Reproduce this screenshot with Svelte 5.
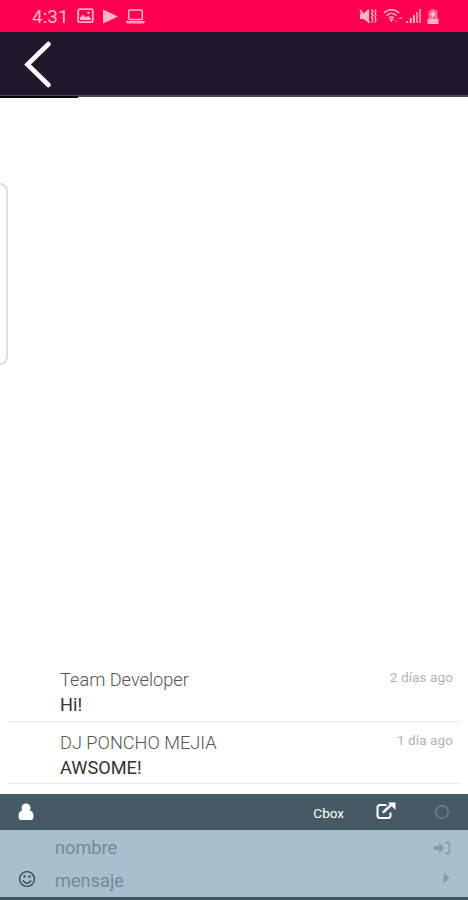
<script lang="ts">
	const messages = [
		{ name: 'Team Developer', text: 'Hi!', time: '2 días ago' },
		{ name: 'DJ PONCHO MEJIA', text: 'AWSOME!', time: '1 día ago' }
	];

	let nombre = $state('');
	let mensaje = $state('');
</script>

<div class="screen">
	<!-- Status bar -->
	<div class="status-bar">
		<span class="clock">4:31</span>
		<svg class="ic-picture" width="17" height="16" viewBox="0 0 17 16">
			<rect x="1.2" y="1.2" width="14.6" height="13" rx="1.5" fill="none" stroke="currentColor" stroke-width="1.8" />
			<path d="M3 12V9.5l3-3 3 3 2-2 3 3V12z" fill="currentColor" />
			<circle cx="11.5" cy="4.7" r="1.2" fill="currentColor" />
		</svg>
		<svg class="ic-play" width="15" height="15" viewBox="0 0 15 15">
			<path d="M0 .5 15 7.5 0 14.5z" fill="currentColor" />
		</svg>
		<svg class="ic-laptop" width="19" height="15" viewBox="0 0 19 15">
			<rect x="2.7" y="1" width="13.6" height="9.5" rx="1" fill="none" stroke="currentColor" stroke-width="1.5" />
			<path d="M.7 12.6h17.6l-1 1.4H1.7z" fill="none" stroke="currentColor" stroke-width="1.2" />
		</svg>
		<div class="status-right">
			<svg width="18" height="17" viewBox="0 0 18 17">
				<path d="M1 5.5h3.5L10 1v14l-5.5-4H1z" fill="currentColor" />
				<path d="M1 2 10.5 15" stroke="currentColor" stroke-width="1.8" />
				<path d="M12.5 1.5l1.500 2-1.500 2 1.500 2-1.500 2 1.500 2-1.500 3M16 1.500l1 2-1 2 1 2-1 2 1 2-1 3" fill="none" stroke="currentColor" stroke-width="1.3" />
			</svg>
			<svg class="ic-wifi" width="20" height="16" viewBox="0 0 20 16">
				<path d="M1 5c4-4.500 11-4.500 15 0M3.500 7.700c3-3 7-3 10 0M6 10.200c1.500-1.500 3.500-1.500 5 0" fill="none" stroke="currentColor" stroke-width="1.500" />
				<path d="m6.500 11.500 2-1 2 1-2 2.600z" fill="currentColor" />
				<path d="m11.500 12.500 1.500 1.800 1.500-1.800M16 10.500l1.500-1.700 1.500 1.700z" fill="none" stroke="currentColor" opacity=".6" />
			</svg>
			<svg class="ic-signal" width="15" height="16" viewBox="0 0 15 16">
				<path d="M1.300 15v-2M4.800 15v-5M8 15V7" stroke="currentColor" stroke-width="1.900" />
				<path d="M11 15V4M14 15V1" stroke="currentColor" stroke-width="1.900" opacity=".75" />
			</svg>
			<svg class="ic-battery" width="12" height="17" viewBox="0 0 12 17">
				<path d="M4 1h4v1.500h2.500V11h-9V2.500H4z" fill="currentColor" opacity=".6" />
				<path d="M6.500 3 3.500 7h2l-.5 3 3.500-4h-2z" fill="#fff" opacity=".8" />
				<path d="M.5 11h11v5H.5z" fill="currentColor" />
			</svg>
		</div>
	</div>

	<!-- Header -->
	<header class="header">
		<button class="back" aria-label="Back">
			<svg width="30" height="50" viewBox="0 0 30 50">
				<path d="M24.500 5 3.500 25.500 24.500 46" fill="none" stroke="#fff" stroke-width="4.600" stroke-linecap="round" stroke-linejoin="miter" />
			</svg>
		</button>
	</header>

	<!-- Chat -->
	<main class="chat">
		<div class="side-panel"></div>
		<div class="messages">
			{#each messages as message}
				<div class="message">
					<div class="message-top">
						<span class="name">{message.name}</span>
						<span class="time">{message.time}</span>
					</div>
					<div class="text">{message.text}</div>
				</div>
			{/each}
		</div>
	</main>

	<!-- Toolbar -->
	<div class="toolbar">
		<svg class="ic-user" width="16" height="18" viewBox="0 0 16 18">
			<circle cx="8" cy="5" r="4.500" fill="currentColor" />
			<path d="M3.800 7.500C1.500 8 .5 10 .5 13.500.5 16 1.500 17 3.500 17h9c2 0 3-1 3-3.500 0-3.500-1-5.500-3.300-6z" fill="currentColor" />
		</svg>
		<span class="brand">Cbox</span>
		<svg class="ic-external" width="20" height="18" viewBox="0 0 20 18">
			<path d="M10.500 3H4Q1.500 3 1.500 5.500v8Q1.500 16 4 16h8q2.500 0 2.500-2.500v-3" fill="none" stroke="currentColor" stroke-width="2" />
			<path d="M6.800 10.700 15.500 2.500" stroke="currentColor" stroke-width="2.500" />
			<path d="M12 .5h7.500V8z" fill="currentColor" />
		</svg>
		<svg class="ic-circle" width="16" height="16" viewBox="0 0 16 16">
			<circle cx="8" cy="8" r="6.200" fill="none" stroke="#687982" stroke-width="2" />
		</svg>
	</div>

	<!-- Form -->
	<form class="form">
		<div class="row">
			<span class="row-icon"></span>
			<input type="text" placeholder="nombre" bind:value={nombre} />
			<svg class="ic-login" width="17" height="14" viewBox="0 0 17 14">
				<path d="M0 5h5V1.800L10.500 7 5 12.200V9H0z" fill="currentColor" />
				<path d="M11 1.500h2Q15.500 1.500 15.500 4v6q0 2.500-2.500 2.500h-2" fill="none" stroke="currentColor" stroke-width="1.500" />
			</svg>
		</div>
		<div class="row">
			<span class="row-icon">
				<svg width="18" height="18" viewBox="0 0 18 18">
					<circle cx="9" cy="9" r="7.400" fill="none" stroke="#37474f" stroke-width="1.400" />
					<circle cx="6.500" cy="6.500" r="1.200" fill="#37474f" />
					<circle cx="11.500" cy="6.500" r="1.200" fill="#37474f" />
					<path d="M4.800 10.500q4.200 5.500 8.400 0" fill="none" stroke="#37474f" stroke-width="1.300" />
				</svg>
			</span>
			<input type="text" placeholder="mensaje" bind:value={mensaje} />
			<svg class="ic-send" width="7" height="12" viewBox="0 0 7 12">
				<path d="M.5.5 6.500 6 .5 11.500z" fill="currentColor" />
			</svg>
		</div>
	</form>
</div>

<style>
	:global(body) {
		background: #fff;
	}

	.screen {
		display: flex;
		flex-direction: column;
		box-sizing: border-box;
		height: 900px;
		border-bottom: 3px solid #405560;
		font-family: Roboto, 'Liberation Sans', sans-serif;
		overflow: hidden;
	}

	svg {
		display: block;
		flex-shrink: 0;
	}

	/* Status bar */
	.status-bar {
		display: flex;
		align-items: center;
		height: 32px;
		padding: 0 29px 0 32px;
		background: #ff0050;
		color: #ffb3ca;
		box-sizing: border-box;
	}

	.clock {
		width: 45px;
		font-size: 19px;
	}

	.ic-play {
		margin-left: 9px;
	}

	.ic-laptop {
		margin-left: 8px;
	}

	.status-right {
		display: flex;
		align-items: center;
		margin-left: auto;
	}

	.ic-wifi {
		margin-left: 6px;
	}

	.ic-signal {
		margin-left: 3px;
	}

	.ic-battery {
		margin-left: 6px;
	}

	/* Header */
	.header {
		height: 65px;
		box-sizing: border-box;
		background: #20182c;
		border-bottom: 2px solid #4b4655;
	}

	.back {
		display: block;
		width: 78px;
		height: 66px;
		padding: 0 0 0 24px;
		border: none;
		border-bottom: 2px solid #09060f;
		background: none;
		box-sizing: border-box;
	}

	/* Chat */
	.chat {
		flex: 1;
		display: flex;
		flex-direction: column;
		justify-content: space-between;
	}

	.side-panel {
		width: 8px;
		height: 182px;
		margin-top: 86px;
		box-sizing: border-box;
		border: 2px solid #dfdfdf;
		border-left: none;
		border-radius: 0 8px 8px 0;
	}

	.messages {
		padding: 0 8px 10px;
	}

	.message {
		height: 62.5px;
		padding: 8px 7px 0 52px;
		box-sizing: border-box;
		border-bottom: 1px solid #ebebeb;
	}

	.message-top {
		display: flex;
		justify-content: space-between;
		height: 25px;
		line-height: 25px;
	}

	.name {
		font-size: 18.2px;
		font-weight: 300;
		color: #555;
	}

	.time {
		font-size: 13.5px;
		line-height: 20px;
		letter-spacing: 0.1px;
		color: #b3b3b3;
	}

	.text {
		font-size: 18.2px;
		line-height: 25px;
		color: #333;
	}

	/* Toolbar */
	.toolbar {
		display: flex;
		align-items: center;
		height: 36px;
		padding: 0 18px;
		box-sizing: border-box;
		background: #455a64;
		color: #fff;
	}

	.brand {
		margin-left: auto;
		padding-top: 2px;
		font-size: 13.5px;
	}

	.ic-external {
		margin: 0 38px 3px 32px;
	}

	/* Form */
	.form {
		height: 67px;
		padding: 1px 18px 0;
		box-sizing: border-box;
		background: #a8bfcd;
		color: #839ba8;
	}

	.row {
		display: flex;
		align-items: center;
		height: 33px;
	}

	.row-icon {
		width: 37px;
		padding-bottom: 4px;
	}

	input {
		flex: 1;
		min-width: 0;
		padding: 0;
		border: none;
		outline: none;
		background: none;
		font-family: inherit;
		font-size: 18.2px;
		color: #37474f;
	}

	input::placeholder {
		color: #748996;
	}

	.ic-login {
		margin-right: -1px;
	}

	.ic-send {
		margin-bottom: 5px;
	}
</style>
